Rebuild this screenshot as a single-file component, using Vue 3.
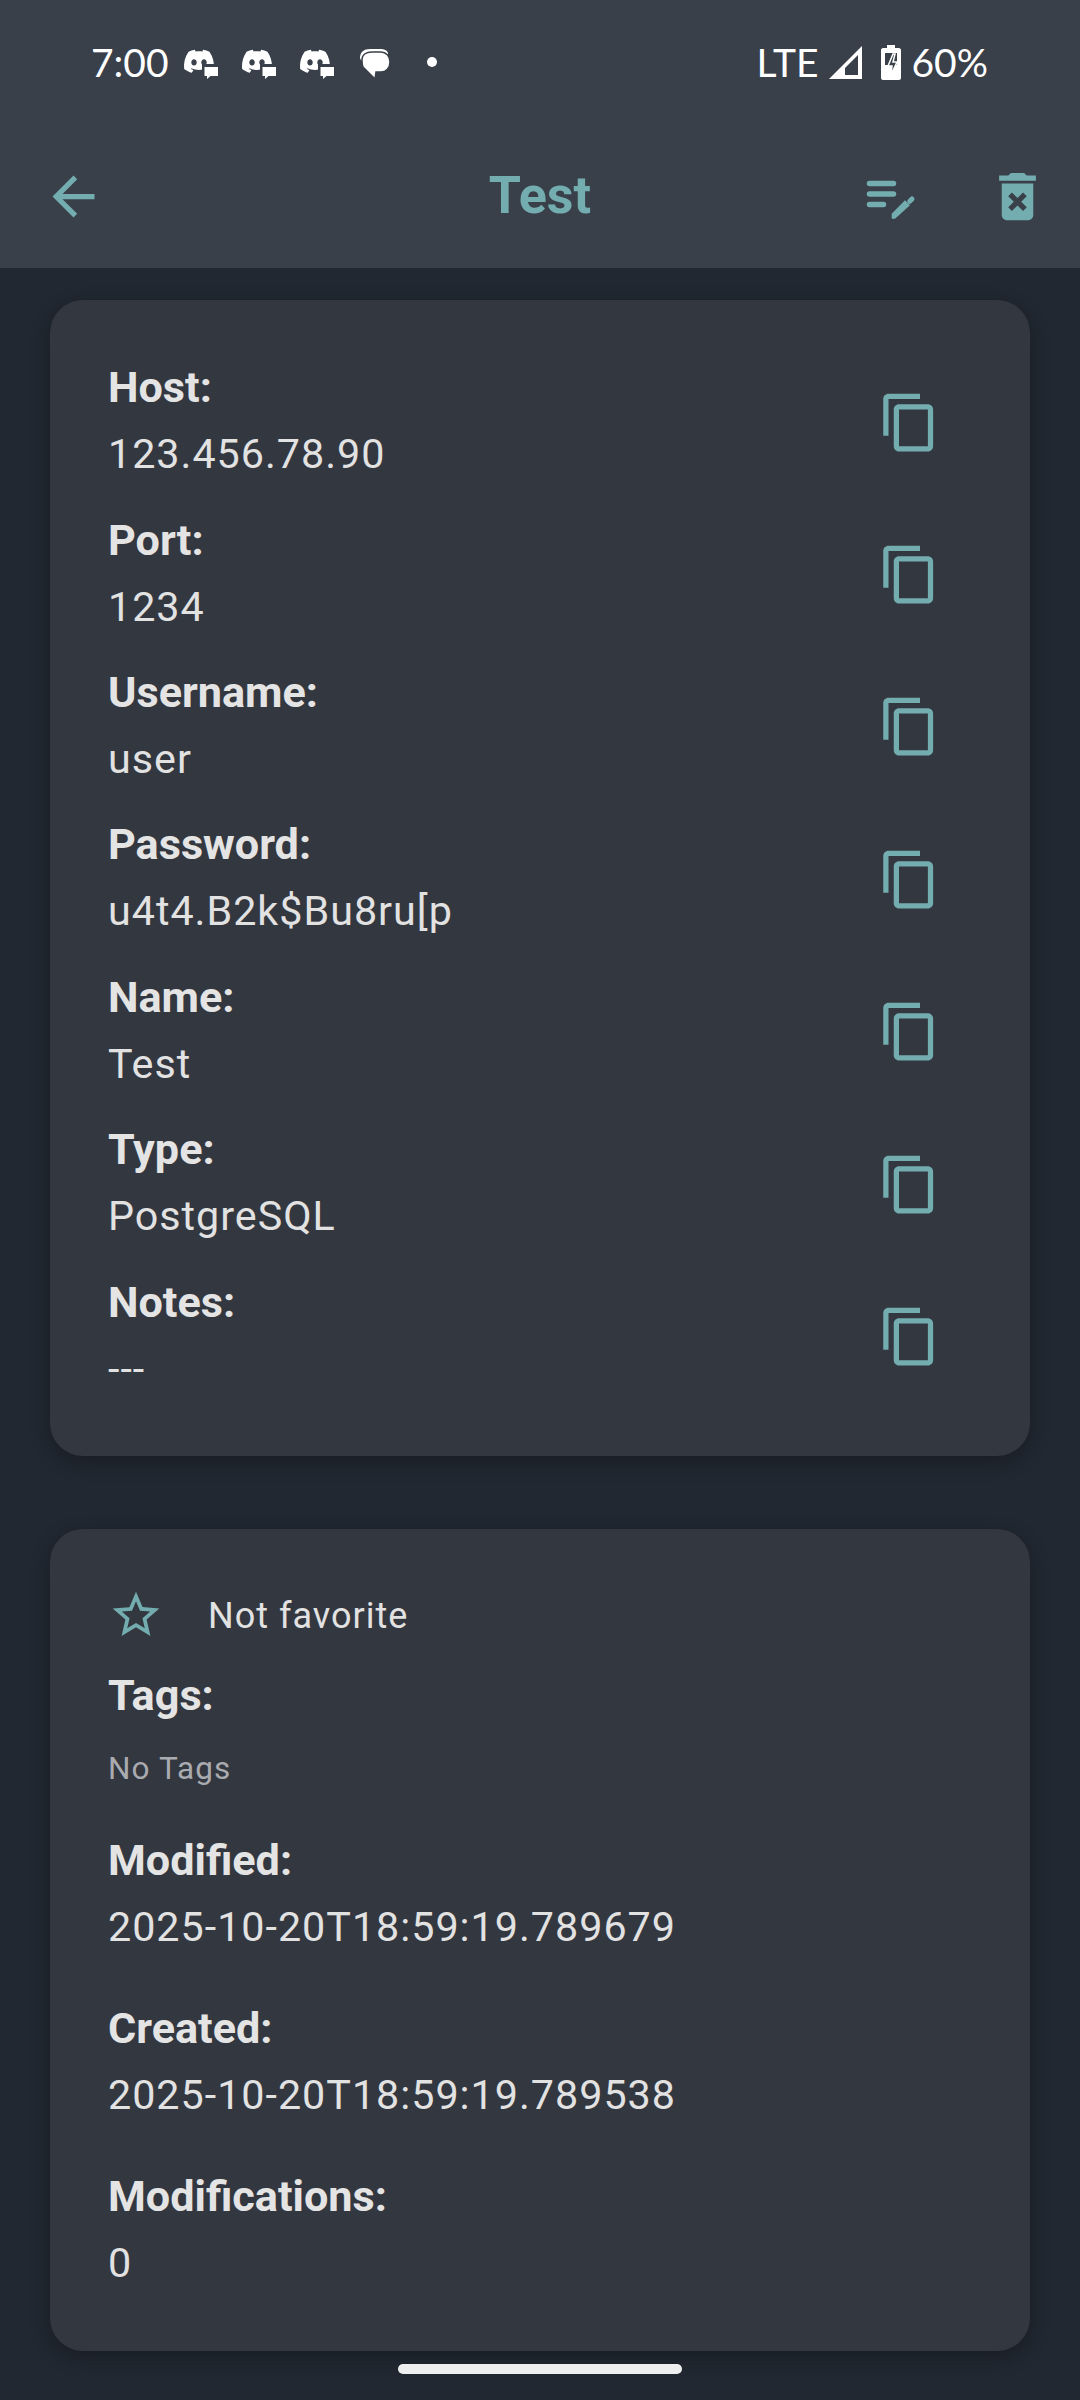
<script setup>
const creds = [
  { label: 'Host:', value: '123.456.78.90' },
  { label: 'Port:', value: '1234' },
  { label: 'Username:', value: 'user' },
  { label: 'Password:', value: 'u4t4.B2k$Bu8ru[p' },
  { label: 'Name:', value: 'Test' },
  { label: 'Type:', value: 'PostgreSQL' },
  { label: 'Notes:', value: '---' },
]
const meta = [
  { label: 'Modified:', value: '2025-10-20T18:59:19.789679' },
  { label: 'Created:', value: '2025-10-20T18:59:19.789538' },
  { label: 'Modifications:', value: '0' },
]
const discord = 'M20.317 4.3698a19.7913 19.7913 0 00-4.8851-1.5152.0741.0741 0 00-.0785.0371c-.211.3753-.4447.8648-.6083 1.2495-1.8447-.2762-3.68-.2762-5.4868 0-.1636-.3933-.4058-.8742-.6177-1.2495a.077.077 0 00-.0785-.037 19.7363 19.7363 0 00-4.8852 1.515.0699.0699 0 00-.0321.0277C.5334 9.0458-.319 13.5799.0992 18.0578a.0824.0824 0 00.0312.0561c2.0528 1.5076 4.0413 2.4228 5.9929 3.0294a.0777.0777 0 00.0842-.0276c.4616-.6304.8731-1.2952 1.226-1.9942a.076.076 0 00-.0416-.1057c-.6528-.2476-1.2743-.5495-1.8722-.8923a.077.077 0 01-.0076-.1277c.1258-.0943.2517-.1923.3718-.2914a.0743.0743 0 01.0776-.0105c3.9278 1.7933 8.18 1.7933 12.0614 0a.0739.0739 0 01.0785.0095c.1202.099.246.1981.3728.2924a.077.077 0 01-.0066.1276 12.2986 12.2986 0 01-1.873.8914.0766.0766 0 00-.0407.1067c.3604.698.7719 1.3628 1.225 1.9932a.076.076 0 00.0842.0286c1.961-.6067 3.9495-1.5219 6.0023-3.0294a.077.077 0 00.0313-.0552c.5004-5.177-.8382-9.6739-3.5485-13.6604a.061.061 0 00-.0312-.0286zM8.02 15.3312c-1.1825 0-2.1569-1.0857-2.1569-2.419 0-1.3332.9555-2.4189 2.157-2.4189 1.2108 0 2.1757 1.0952 2.1568 2.419 0 1.3332-.9555 2.4189-2.1569 2.4189zm7.9748 0c-1.1825 0-2.1569-1.0857-2.1569-2.419 0-1.3332.9554-2.4189 2.1569-2.4189 1.2108 0 2.1757 1.0952 2.1568 2.419 0 1.3332-.946 2.4189-2.1568 2.4189Z'
</script>

<template>
  <div class="screen">
    <header class="appbar">
      <div class="status">
        <div class="status-left">
          <span class="time">7:00</span>
          <svg v-for="n in 3" :key="n" class="note" viewBox="0 0 36 34" width="36" height="34">
            <g transform="translate(1 1.250) scale(1.250)"><path :d="discord" fill="#fff" /></g>
            <rect x="19" y="19" width="17" height="15" fill="#39404a" />
            <path d="M21.500 22h13.500v9h-7.500l-3.500 3v-3h-2.500z" fill="#fff" />
          </svg>
          <svg class="chat" viewBox="0 0 32 34" width="32" height="34">
            <path d="M1 13c0-6 4-9 10-9h11c3 0 6 1 7 4v8H3c-1-1-2-2-2-3z" fill="#fff" />
            <path d="M3 15c0-5 4-8 10-8h9c5 0 9 4 9 10s-4 10-9 10h-5l-1 7-12-12c-1-2-1-5-1-7z" fill="#fff" stroke="#39404a" stroke-width="1.500" />
          </svg>
          <span class="dot"></span>
        </div>
        <div class="status-right">
          <span class="lte">LTE</span>
          <svg class="signal" viewBox="0 0 33 33" width="33" height="33">
            <path d="M0 33 33 0v33z" fill="#fff" />
            <path d="M16 29h13V9L16 22z" fill="#39404a" />
          </svg>
          <svg class="battery" viewBox="0 0 20 35" width="20" height="35">
            <path d="M6 0h8v3h4c1 0 2 1 2 2v28c0 1-1 2-2 2H2c-1 0-2-1-2-2V5c0-1 1-2 2-2h4z" fill="#fff" />
            <rect x="4" y="8" width="12" height="12" fill="#39404a" />
            <path d="M12 9 7 21h4l-1 9 6-13h-4l2-8z" fill="#39404a" stroke="#fff" stroke-width="1.500" />
          </svg>
          <span class="pct">60%</span>
        </div>
      </div>
      <div class="toolbar">
        <div class="tb-left">
          <svg class="icon" viewBox="0 0 24 24"><path d="M20 11H7.830l5.590-5.590L12 4l-8 8 8 8 1.410-1.410L7.830 13H20v-2z" /></svg>
        </div>
        <h1 class="title">Test</h1>
        <div class="tb-right">
          <svg class="icon" viewBox="0 0 63 63">
            <path class="edit-lines" d="M10.500 18.500h24M10.500 29h24M10.500 39.500h14" />
            <path d="M32.700 48.700 46 35.300l5 5-15 13.400h-3.300z" />
            <path class="eraser" d="M50.700 36.300 53 34" />
          </svg>
          <svg class="icon" viewBox="0 0 24 24"><path d="M6 19c0 1.100.9 2 2 2h8c1.100 0 2-.9 2-2V7H6v12zm2.460-7.120 1.410-1.410L12 12.590l2.120-2.120 1.410 1.410L13.410 14l2.120 2.120-1.410 1.410L12 15.410l-2.120 2.120-1.410-1.410L10.590 14l-2.130-2.120zM15.500 4l-1-1h-5l-1 1H5v2h14V4z" /></svg>
        </div>
      </div>
    </header>

    <section class="card creds">
      <div v-for="c in creds" :key="c.label" class="cred-row">
        <div>
          <div class="label">{{ c.label }}</div>
          <div class="value">{{ c.value }}</div>
        </div>
        <svg class="icon" viewBox="0 0 24 24"><path d="M16 1H4c-1.100 0-2 .9-2 2v14h2V3h12V1zm3 4H8c-1.100 0-2 .9-2 2v14c0 1.100.9 2 2 2h11c1.100 0 2-.9 2-2V7c0-1.100-.9-2-2-2zm0 16H8V7h11v14z" /></svg>
      </div>
    </section>

    <section class="card info">
      <div class="fav">
        <svg class="star" viewBox="0 0 24 24"><path d="M22 9.240l-7.190-.62L12 2 9.190 8.630 2 9.240l5.460 4.730L5.820 21 12 17.270 18.180 21l-1.630-7.030L22 9.240zM12 15.400l-3.760 2.270 1-4.280-3.320-2.880 4.380-.38L12 6.100l1.710 4.040 4.380.38-3.320 2.880 1 4.280L12 15.400z" /></svg>
        <span class="fav-text">Not favorite</span>
      </div>
      <div class="label">Tags:</div>
      <div class="none">No Tags</div>
      <div v-for="m in meta" :key="m.label" class="meta">
        <div class="label">{{ m.label }}</div>
        <div class="value">{{ m.value }}</div>
      </div>
    </section>

    <div class="home"></div>
  </div>
</template>

<style>
html, body { margin: 0; background: #212831; }
</style>

<style scoped>
.screen {
  width: 1080px;
  height: 2400px;
  overflow: hidden;
  background: #212831;
  font-family: Roboto, "Liberation Sans", sans-serif;
  display: flex;
  flex-direction: column;
  align-items: center;
}
.appbar {
  width: 100%;
  height: 268px;
  background: #39404a;
  flex: none;
}
.status {
  height: 124px;
  box-sizing: border-box;
  padding: 0 92px 0 91px;
  display: flex;
  justify-content: space-between;
  align-items: center;
  color: #fff;
  font-family: Lato, sans-serif;
  font-size: 39px;
}
.status-left, .status-right { display: flex; align-items: center; }
.time { width: 92px; }
.note { margin-right: 22px; flex: none; }
.chat { margin-left: 2px; }
.dot { width: 10px; height: 10px; border-radius: 50%; background: #fff; margin-left: 36px; }
.signal { margin: 0 19px 0 10px; }
.battery { margin-right: 11px; }
.toolbar {
  height: 144px;
  display: grid;
  grid-template-columns: 1fr auto 1fr;
  align-items: center;
}
.tb-left { padding-left: 42px; display: flex; }
.tb-right { padding-right: 31px; display: flex; justify-content: flex-end; gap: 64px; }
.icon { width: 63px; height: 63px; fill: #74adb0; flex: none; display: block; }
.edit-lines { fill: none; stroke: #74adb0; stroke-width: 5.500; stroke-linecap: round; }
.eraser { fill: none; stroke: #74adb0; stroke-width: 5; stroke-linecap: round; }
.title {
  margin: 0;
  color: #74adb0;
  font-size: 52px;
  font-weight: 700;
  line-height: 60px;
}
.card {
  width: 980px;
  box-sizing: border-box;
  background: #33373f;
  border-radius: 33px;
  box-shadow: 0 6px 18px rgba(15, 18, 24, 0.45);
  padding-left: 58px;
  flex: none;
}
.creds {
  margin-top: 32px;
  padding-top: 57px;
  padding-bottom: 32px;
  padding-right: 89px;
}
.cred-row {
  display: flex;
  justify-content: space-between;
  align-items: center;
  height: 152.400px;
  padding-bottom: 22px;
  box-sizing: border-box;
}
.label {
  color: #e4e4e4;
  font-size: 43.200px;
  font-weight: 700;
  line-height: 62px;
  margin-bottom: 3px;
}
.value {
  color: #e2e2e2;
  font-size: 41.250px;
  letter-spacing: 1px;
  line-height: 65px;
}
.info {
  margin-top: 73px;
  padding-top: 58px;
  padding-bottom: 53px;
}
.fav { display: flex; align-items: center; height: 56px; }
.star { width: 56px; height: 56px; fill: #74adb0; flex: none; margin-right: 44px; }
.fav-text {
  color: #e2e2e2;
  font-size: 36px;
  letter-spacing: 1px;
  padding-top: 2px;
}
.none {
  color: #a9abb0;
  font-size: 31.500px;
  letter-spacing: 1.100px;
  line-height: 40px;
  margin-top: 22px;
}
.info > .label { margin-top: 22px; }
.meta { margin-top: 36px; height: 132px; }
.none + .meta { margin-top: 41px; }
.home {
  position: absolute;
  left: 398px;
  top: 2364px;
  width: 284px;
  height: 10px;
  border-radius: 5px;
  background: #eef0f0;
}
</style>
